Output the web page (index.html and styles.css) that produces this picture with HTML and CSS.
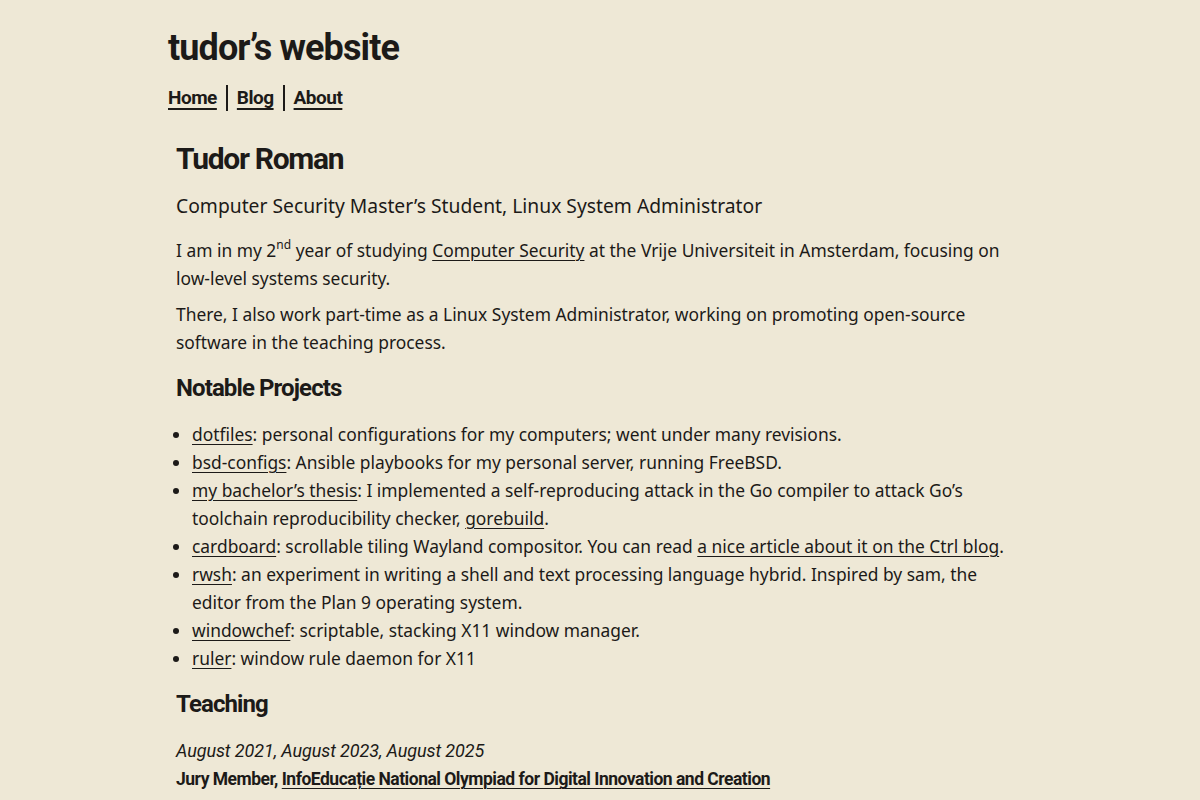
FILE: index.html
```html
<!DOCTYPE html>
<html lang="en">
<head>
<meta charset="utf-8">
<title>tudor’s website</title>
<link rel="stylesheet" href="styles.css">
</head>
<body>
<div class="page">
  <header class="site-header">
    <div class="site-title">tudor’s website</div>
    <nav class="nav">
      <a href="#">Home</a><span class="sep"></span><a href="#">Blog</a><span class="sep"></span><a href="#">About</a>
    </nav>
  </header>
  <main class="content">
    <h1>Tudor Roman</h1>
    <p class="lead">Computer Security Master’s Student, Linux System Administrator</p>
    <p>I am in my 2<sup>nd</sup> year of studying <a href="#">Computer Security</a> at the Vrije Universiteit in Amsterdam, focusing on low-level systems security.</p>
    <p>There, I also work part-time as a Linux System Administrator, working on promoting open-source software in the teaching process.</p>
    <h2>Notable Projects</h2>
    <ul class="projects">
      <li><a href="#">dotfiles</a>: personal configurations for my computers; went under many revisions.</li>
      <li><a href="#">bsd-configs</a>: Ansible playbooks for my personal server, running FreeBSD.</li>
      <li><a href="#">my bachelor’s thesis</a>: I implemented a self-reproducing attack in the Go compiler to attack Go’s toolchain reproducibility checker, <a href="#">gorebuild</a>.</li>
      <li><a href="#">cardboard</a>: scrollable tiling Wayland compositor. You can read <a href="#">a nice article about it on the Ctrl blog</a>.</li>
      <li><a href="#">rwsh</a>: an experiment in writing a shell and text processing language hybrid. Inspired by sam, the editor from the Plan 9 operating system.</li>
      <li><a href="#">windowchef</a>: scriptable, stacking X11 window manager.</li>
      <li><a href="#">ruler</a>: window rule daemon for X11</li>
    </ul>
    <h2>Teaching</h2>
    <p class="date">August 2021, August 2023, August 2025</p>
    <p class="role">Jury Member, <a href="#">InfoEducație National Olympiad for Digital Innovation and Creation</a></p>
    <p class="desc">I was part of the jury and scientific committee for the national contest on software and web development competition for high school students.</p>
  </main>
</div>
</body>
</html>
```

FILE: styles.css
```css
html, body {
  margin: 0;
  padding: 0;
  background: #eee8d6;
  color: #1c1a18;
}
body {
  font-family: "Noto Sans", "Open Sans", sans-serif;
  font-size: 17.4px;
  line-height: 28px;
}
a {
  color: inherit;
  text-decoration: underline;
  text-underline-offset: 3px;
  text-decoration-thickness: 1px;
}
.page {
  width: 864px;
  margin: 0 auto;
  padding-top: 25px;
}
.site-title,
.nav,
h1, h2, .date, .role {
  font-family: "Roboto", sans-serif;
}
.site-title {
  font-weight: 700;
  font-size: 36px;
  line-height: 46px;
  letter-spacing: -0.9px;
}
.nav {
  display: flex;
  align-items: center;
  margin-top: 14px;
  font-weight: 700;
  font-size: 19px;
  line-height: 26px;
  letter-spacing: -0.5px;
}
.nav a {
  text-decoration-thickness: 2px;
  text-underline-offset: 4px;
}
.sep {
  display: inline-block;
  width: 2px;
  height: 26px;
  background: #1c1a18;
  margin: 0 9px;
}
.content {
  padding: 0 8px;
  margin-top: 30px;
}
h1 {
  font-size: 30px;
  line-height: 36px;
  font-weight: 700;
  letter-spacing: -1.3px;
  margin: 0 0 15px;
}
h2 {
  font-size: 24px;
  line-height: 32px;
  font-weight: 700;
  letter-spacing: -0.9px;
  margin: 16px 0 16px;
}
p {
  margin: 8px 0;
}
.lead {
  font-size: 19.3px;
  line-height: 28px;
  margin: 0 0 16px;
}
sup {
  font-size: 12px;
  line-height: 0;
  vertical-align: 8px;
}
.projects {
  margin: 0;
  padding-left: 16px;
}
.date {
  font-style: italic;
  font-size: 18px;
  letter-spacing: -0.1px;
  margin: 17px 0 0;
}
.role {
  font-weight: 700;
  font-size: 17.5px;
  letter-spacing: -0.5px;
  margin: 0;
}
.desc {
  margin: 0;
}
```
